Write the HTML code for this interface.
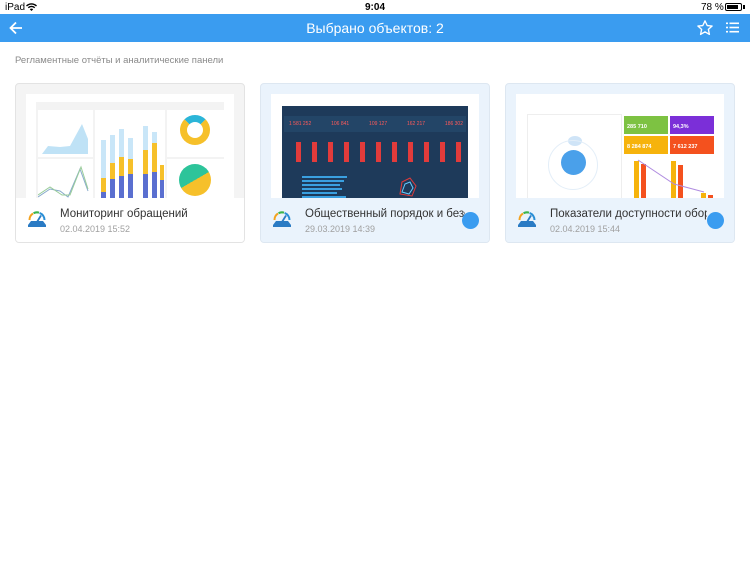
<!DOCTYPE html>
<html><head><meta charset="utf-8">
<style>
*{margin:0;padding:0;box-sizing:border-box}
body{width:750px;height:563px;background:#fff;font-family:"Liberation Sans",Arial,sans-serif;position:relative;overflow:hidden}
.sb{position:absolute;top:0;left:0;width:750px;height:14px;font-size:10px;color:#000}
.bar{position:absolute;top:14px;left:0;width:750px;height:28px;background:#3a9cf0;color:#fff}
.bar .t{position:absolute;left:0;right:0;top:6px;text-align:center;font-size:14px}
.cap{position:absolute;left:15px;top:55px;font-size:9.5px;color:#8a8a8a}
.card{position:absolute;top:83px;width:230px;height:160px;border:1px solid #e3e3e3;border-radius:4px;background:#f4f4f4;overflow:hidden}
.card.sel{background:#eaf3fc;border-color:#dde7f1}
.thumb{position:absolute;left:10px;top:10px;width:208px;height:105px;background:#fff;overflow:hidden}
.foot{position:absolute;left:0;top:114px;width:230px;height:46px;background:#fff}
.sel .foot{background:#eaf3fc}
.ttl{position:absolute;left:44px;top:10px;font-size:11.5px;color:#333;white-space:nowrap;width:150px;overflow:hidden}
.dt{position:absolute;left:44px;top:26px;font-size:9px;color:#a0a0a0}
.ic{position:absolute;left:11px;top:11px}
.dot{position:absolute;left:201px;top:128px;width:17px;height:17px;border-radius:50%;background:#3a9cf0}
</style></head><body>
<div class="sb"><span style="position:absolute;left:5px;top:2px">iPad</span>
<svg style="position:absolute;left:26px;top:3px" width="11" height="8" viewBox="0 0 11 8"><path d="M0.5 3 A7 7 0 0 1 10.5 3 M2.3 4.8 A4.5 4.5 0 0 1 8.7 4.8" stroke="#000" stroke-width="1.4" fill="none"/><path d="M3.8 6.3 L5.5 8 L7.2 6.3 A2.4 2.4 0 0 0 3.8 6.3Z" fill="#000"/></svg>
<span style="position:absolute;left:365px;top:2px;font-weight:bold">9:04</span>
<span style="position:absolute;left:701px;top:2px">78 %</span>
<div style="position:absolute;left:725px;top:3px;width:17px;height:8px;border:1px solid #000;border-radius:2px"><div style="margin:1px;width:11px;height:4px;background:#000"></div></div>
<div style="position:absolute;left:743px;top:5px;width:1.5px;height:4px;background:#000"></div>
</div>
<div class="bar">
<svg style="position:absolute;left:9px;top:7px" width="14" height="14" viewBox="0 0 14 14"><path d="M13 7H2M7 1.5L1.5 7L7 12.5" stroke="#fff" stroke-width="1.8" fill="none"/></svg>
<div class="t">Выбрано объектов: 2</div>
<svg style="position:absolute;left:696px;top:5px" width="18" height="18" viewBox="0 0 24 24"><path d="M12 2.5l2.9 6.2 6.6.7-5 4.5 1.4 6.6L12 17.1 6.1 20.5l1.4-6.6-5-4.5 6.6-.7z" stroke="#fff" stroke-width="1.8" fill="none" stroke-linejoin="round"/></svg>
<svg style="position:absolute;left:726px;top:8px" width="13" height="11" viewBox="0 0 13 11"><g fill="#fff"><rect x="0" y="0.5" width="2" height="1.6"/><rect x="3.5" y="0.5" width="9.5" height="1.6"/><rect x="0" y="4.7" width="2" height="1.6"/><rect x="3.5" y="4.7" width="9.5" height="1.6"/><rect x="0" y="8.9" width="2" height="1.6"/><rect x="3.5" y="8.9" width="9.5" height="1.6"/></g></svg>
</div>
<div class="cap">Регламентные отчёты и аналитические панели</div>

<svg width="0" height="0" style="position:absolute"><defs>
<g id="g">
<path d="M2.5 11 A7.5 7.5 0 0 1 6 4.5" stroke="#f4a21d" stroke-width="2" fill="none"/>
<path d="M6.5 4.2 A7.5 7.5 0 0 1 12 3.6" stroke="#3cb44b" stroke-width="2" fill="none"/>
<path d="M12.6 3.9 A7.5 7.5 0 0 1 17.5 11" stroke="#2a8fd6" stroke-width="2" fill="none"/>
<path d="M1 16 L4 12 L16 12 L19 16Z" fill="#2a7bc4"/>
<path d="M10 13 L14 6.5" stroke="#2a7bc4" stroke-width="1.8"/>
<rect x="1" y="16" width="18" height="2" fill="#2a7bc4"/>
</g></defs></svg>

<div class="card" style="left:15px">
<div class="thumb" style="background:#fff">
 <div style="position:absolute;left:10px;top:8px;width:188px;height:97px;background:#f3f3f3"></div>
 <div style="position:absolute;left:12px;top:16px;width:55px;height:47px;background:#fff"></div>
 <svg style="position:absolute;left:12px;top:16px" width="55" height="47"><path d="M4 44 L10 36 L22 37 L32 36 L44 14 L50 29 L50 44Z" fill="#bfe2f6"/></svg>
 <div style="position:absolute;left:12px;top:65px;width:55px;height:40px;background:#fff"></div>
 <svg style="position:absolute;left:12px;top:65px" width="55" height="40"><path d="M0 38 L12 30 L22 32 L30 38 L42 10 L50 32" stroke="#8ac" fill="none"/><path d="M0 36 L12 28 L24 36 L32 36 L43 8 L50 30" stroke="#9c9" fill="none"/></svg>
 <div style="position:absolute;left:69px;top:16px;width:70px;height:89px;background:#fff"></div>
 <svg style="position:absolute;left:69px;top:16px" width="70" height="89"><g>
 <rect x="6" y="30" width="5" height="59" fill="#c9e6f8"/><rect x="6" y="68" width="5" height="14" fill="#f6c02a"/><rect x="6" y="82" width="5" height="7" fill="#5a6fd0"/>
 <rect x="15" y="25" width="5" height="64" fill="#c9e6f8"/><rect x="15" y="53" width="5" height="16" fill="#f6c02a"/><rect x="15" y="69" width="5" height="20" fill="#5a6fd0"/>
 <rect x="24" y="19" width="5" height="70" fill="#c9e6f8"/><rect x="24" y="47" width="5" height="19" fill="#f6c02a"/><rect x="24" y="66" width="5" height="23" fill="#5a6fd0"/>
 <rect x="33" y="28" width="5" height="61" fill="#c9e6f8"/><rect x="33" y="49" width="5" height="15" fill="#f6c02a"/><rect x="33" y="64" width="5" height="25" fill="#5a6fd0"/>
 <rect x="48" y="16" width="5" height="73" fill="#c9e6f8"/><rect x="48" y="40" width="5" height="24" fill="#f6c02a"/><rect x="48" y="64" width="5" height="25" fill="#5a6fd0"/>
 <rect x="57" y="22" width="5" height="67" fill="#c9e6f8"/><rect x="57" y="33" width="5" height="29" fill="#f6c02a"/><rect x="57" y="62" width="5" height="27" fill="#5a6fd0"/>
 <rect x="65" y="55" width="4" height="34" fill="#f6c02a"/><rect x="65" y="70" width="4" height="19" fill="#5a6fd0"/>
 </g></svg>
 <div style="position:absolute;left:141px;top:16px;width:57px;height:47px;background:#fff"></div>
 <div style="position:absolute;left:154px;top:21px;width:30px;height:30px;border-radius:50%;border:7px solid #f6c02a;border-top-color:#2bb5d8"></div>
 <div style="position:absolute;left:141px;top:65px;width:57px;height:40px;background:#fff"></div>
 <div style="position:absolute;left:153px;top:70px;width:32px;height:32px;border-radius:50%;background:linear-gradient(150deg,#2dc49a 50%,#f6c02a 50%)"></div>
</div>
<div class="foot"><svg class="ic" width="20" height="19"><use href="#g"/></svg><div class="ttl">Мониторинг обращений</div><div class="dt">02.04.2019 15:52</div></div>
</div>

<div class="card sel" style="left:260px">
<div class="thumb">
 <div style="position:absolute;left:11px;top:12px;width:186px;height:93px;background:#1e3a5a"></div>
 <div style="position:absolute;left:13px;top:22px;width:182px;height:16px;background:#234567"></div>
 <div style="position:absolute;left:18px;top:27px;width:174px;font-size:5px;color:#ff5a5a;display:flex;justify-content:space-between;white-space:nowrap"><span>1 581 252</span><span>106 841</span><span>109 127</span><span>162 217</span><span>186 302</span></div>
 <svg style="position:absolute;left:11px;top:40px" width="186" height="40"><g fill="#e23b3b">
 <rect x="14" y="8" width="5" height="20"/><rect x="30" y="8" width="5" height="20"/><rect x="46" y="8" width="5" height="20"/><rect x="62" y="8" width="5" height="20"/><rect x="78" y="8" width="5" height="20"/><rect x="94" y="8" width="5" height="20"/><rect x="110" y="8" width="5" height="20"/><rect x="126" y="8" width="5" height="20"/><rect x="142" y="8" width="5" height="20"/><rect x="158" y="8" width="5" height="20"/><rect x="174" y="8" width="5" height="20"/></g></svg>
 <svg style="position:absolute;left:11px;top:80px" width="186" height="25"><g fill="#3aa0e0"><rect x="20" y="2" width="45" height="2"/><rect x="20" y="6" width="42" height="2"/><rect x="20" y="10" width="38" height="2"/><rect x="20" y="14" width="40" height="2"/><rect x="20" y="18" width="35" height="2"/><rect x="20" y="22" width="44" height="2"/></g><path d="M118 20 L120 8 L128 4 L134 12 L130 22Z" stroke="#e23b3b" fill="none"/><path d="M120 18 L123 10 L128 8 L131 14 L127 20Z" stroke="#6cf" fill="none"/></svg>
</div>
<div class="foot"><svg class="ic" width="20" height="19"><use href="#g"/></svg><div class="ttl" style="width:160px">Общественный порядок и безопасность</div><div class="dt">29.03.2019 14:39</div></div>
<div class="dot"></div>
</div>

<div class="card sel" style="left:505px">
<div class="thumb">
 <div style="position:absolute;left:11px;top:20px;width:95px;height:85px;border:1px solid #eee"></div>
 <div style="position:absolute;left:52px;top:42px;width:14px;height:10px;border-radius:50%;background:#cfe4f7"></div>
 <div style="position:absolute;left:45px;top:56px;width:25px;height:25px;border-radius:50%;background:#4aa0ea"></div>
 <div style="position:absolute;left:32px;top:46px;width:50px;height:50px;border-radius:50%;border:1px solid #e3eef8"></div>
 <div style="position:absolute;left:108px;top:22px;width:44px;height:18px;background:#7dc242;color:#fff;font-size:5.5px;padding:8px 0 0 3px;font-weight:bold">285 710</div>
 <div style="position:absolute;left:154px;top:22px;width:44px;height:18px;background:#7b2fd8;color:#fff;font-size:5.5px;padding:8px 0 0 3px;font-weight:bold">94,3%</div>
 <div style="position:absolute;left:108px;top:42px;width:44px;height:18px;background:#f6b30c;color:#fff;font-size:5.5px;padding:8px 0 0 3px;font-weight:bold">8 284 874</div>
 <div style="position:absolute;left:154px;top:42px;width:44px;height:18px;background:#f4511e;color:#fff;font-size:5.5px;padding:8px 0 0 3px;font-weight:bold">7 612 237</div>
 <svg style="position:absolute;left:108px;top:62px" width="90" height="43"><rect x="10" y="5" width="5" height="38" fill="#f6b30c"/><rect x="17" y="8" width="5" height="35" fill="#f4511e"/><rect x="47" y="5" width="5" height="38" fill="#f6b30c"/><rect x="54" y="9" width="5" height="34" fill="#f4511e"/><rect x="77" y="37" width="5" height="6" fill="#f6b30c"/><rect x="84" y="39" width="5" height="4" fill="#f4511e"/><path d="M14 4 L50 28 L80 36" stroke="#b08ce0" fill="none"/></svg>
</div>
<div class="foot"><svg class="ic" width="20" height="19"><use href="#g"/></svg><div class="ttl" style="width:157px">Показатели доступности оборудования</div><div class="dt">02.04.2019 15:44</div></div>
<div class="dot"></div>
</div>
</body></html>
